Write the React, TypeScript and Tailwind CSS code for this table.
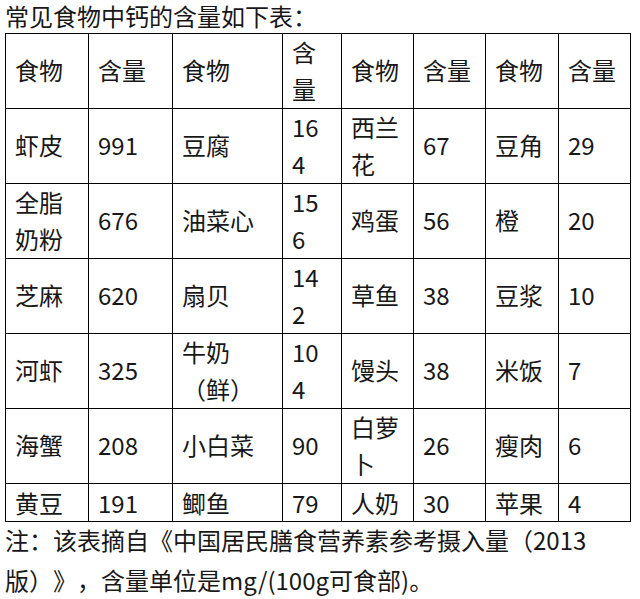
import React from "react";

type Cell = React.ReactNode;

const rows: Cell[][] = [
  ["食物", "含量", "食物", <>含<br />量</>, "食物", "含量", "食物", "含量"],
  ["虾皮", "991", "豆腐", <>16<br />4</>, <>西兰<br />花</>, "67", "豆角", "29"],
  [<>全脂<br />奶粉</>, "676", "油菜心", <>15<br />6</>, "鸡蛋", "56", "橙", "20"],
  ["芝麻", "620", "扇贝", <>14<br />2</>, "草鱼", "38", "豆浆", "10"],
  ["河虾", "325", <>牛奶<br />（鲜）</>, <>10<br />4</>, "馒头", "38", "米饭", "7"],
  ["海蟹", "208", "小白菜", "90", <>白萝<br />卜</>, "26", "瘦肉", "6"],
  ["黄豆", "191", "鲫鱼", "79", "人奶", "30", "苹果", "4"],
];

export default function App() {
  return (
    <div
      className="w-[640px] h-[599px] bg-white text-[#181818] overflow-hidden [text-spacing-trim:space-all]"
      style={{ fontFamily: '"Noto Sans CJK SC", "Noto Sans", sans-serif' }}
    >
      <div className="pl-[5px] pb-[1px] text-[24px] leading-[32px] whitespace-nowrap">常见食物中钙的含量如下表：</div>
      <div className="ml-[5px] w-[626px] border-l border-t border-black grid grid-cols-[83px_84px_110px_59px_72px_72px_73px_72px]">
        {rows.map((r, ri) =>
          r.map((c, ci) => (
            <div
              key={`${ri}-${ci}`}
              className={`border-r border-b border-black flex items-center pl-[9px] text-[24px] leading-[37px] whitespace-nowrap ${
                ri === rows.length - 1 ? "h-[38px]" : "h-[75px] pb-[3px]"
              }`}
            >
              <div>{c}</div>
            </div>
          ))
        )}
      </div>
      <div className="-mt-[2px] pl-[5px] text-[24px] leading-[40px] whitespace-nowrap">
        注：该表摘自《中国居民膳食营养素参考摄入量（2013
        <br />
        版）》，含量单位是mg/(100g可食部)。
      </div>
    </div>
  );
}
